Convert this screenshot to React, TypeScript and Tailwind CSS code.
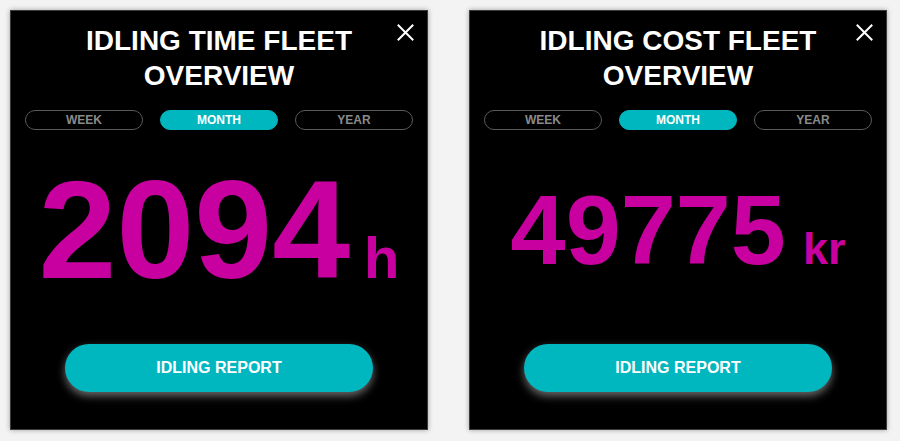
import { useState } from "react";

type Period = "week" | "month" | "year";

type Widget = {
  id: string;
  title: string;
  value: string;
  unit: string;
  valueClass: string;
  unitClass: string;
};

const widgets: Widget[] = [
  {
    id: "time",
    title: "IDLING TIME FLEET",
    value: "2094",
    unit: "h",
    valueClass: "text-[140px]",
    unitClass: "ml-[14px] text-[58px]",
  },
  {
    id: "cost",
    title: "IDLING COST FLEET",
    value: "49775",
    unit: "kr",
    valueClass: "text-[99px]",
    unitClass: "ml-[17px] text-[45px]",
  },
];

const periods: { key: Period; label: string }[] = [
  { key: "week", label: "WEEK" },
  { key: "month", label: "MONTH" },
  { key: "year", label: "YEAR" },
];

function CloseIcon() {
  return (
    <svg width="17" height="17" viewBox="0 0 17 17" fill="none" aria-hidden>
      <path d="M1.5 1.5L15.5 15.5M15.5 1.5L1.5 15.5" stroke="#fff" strokeWidth="2" strokeLinecap="square" />
    </svg>
  );
}

function OverviewCard({ w }: { w: Widget }) {
  const [period, setPeriod] = useState<Period>("month");

  return (
    <div className="relative flex h-[420px] w-[418px] flex-col border border-[#3c3c3c] bg-black shadow-[0_0_5px_rgba(0,0,0,0.35)]">
      <button type="button" className="absolute right-[13px] top-[13px]" aria-label="Close">
        <CloseIcon />
      </button>

      <h2 className="pt-[12px] text-center text-[28px] font-bold leading-[35px] text-white">
        {w.title}
        <br />
        OVERVIEW
      </h2>

      <div className="mt-[17px] flex justify-between px-[14px]">
        {periods.map((p) => (
          <button
            key={p.key}
            type="button"
            onClick={() => setPeriod(p.key)}
            className={
              period === p.key
                ? "flex h-[20px] w-[118px] items-center justify-center rounded-full border-[1.5px] border-[#00b7bf] bg-[#00b7bf] text-[12px] font-bold text-white"
                : "flex h-[20px] w-[118px] items-center justify-center rounded-full border-[1.5px] border-[#5a5a5a] text-[12px] font-bold text-[#8a8a8a]"
            }
          >
            {p.label}
          </button>
        ))}
      </div>

      <div className="flex h-[214px] items-center justify-center pb-[15px]">
        <div className="flex items-baseline font-bold leading-none text-[#c800a0]">
          <span className={w.valueClass}>{w.value}</span>
          <span className={w.unitClass}>{w.unit}</span>
        </div>
      </div>

      <div className="flex justify-center">
        <button
          type="button"
          className="h-[48px] w-[308px] rounded-full bg-[#00b7bf] text-[16px] font-bold text-white shadow-[0_4px_9px_rgba(140,140,140,0.75)]"
        >
          IDLING REPORT
        </button>
      </div>
    </div>
  );
}

export default function App() {
  return (
    <div
      className="flex h-[441px] w-[900px] gap-[41px] bg-[#f3f3f3] pl-[10px] pt-[10px]"
      style={{ fontFamily: '"Liberation Sans", Arial, sans-serif' }}
    >
      {widgets.map((w) => (
        <OverviewCard key={w.id} w={w} />
      ))}
    </div>
  );
}
